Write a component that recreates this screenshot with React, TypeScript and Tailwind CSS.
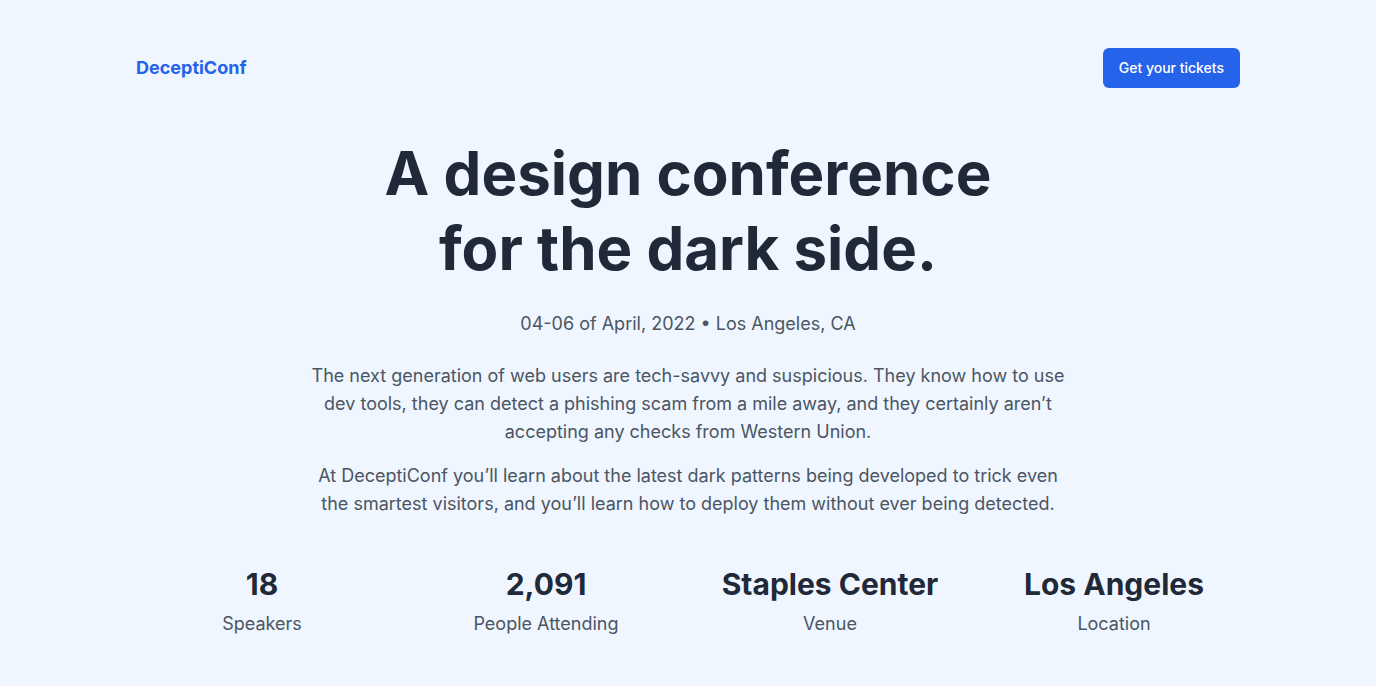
import React from 'react';

const stats = [
    { value: '18', label: 'Speakers' },
    { value: '2,091', label: 'People Attending' },
    { value: 'Staples Center', label: 'Venue' },
    { value: 'Los Angeles', label: 'Location' },
];

const App: React.FC = () => {
    return (
        <div className="min-h-screen bg-[#eff6ff] font-['Inter',sans-serif] text-[#1f2937]">
            <div className="max-w-6xl mx-auto px-6">
                <header className="flex items-center justify-between py-12">
                    <a href="#" className="text-lg font-bold text-[#2563eb]">DeceptiConf</a>
                    <button className="rounded-md bg-[#2563eb] px-4 py-2.5 text-sm font-medium text-white">
                        Get your tickets
                    </button>
                </header>

                <section className="text-center">
                    <h1 className="mx-auto max-w-2xl text-6xl font-bold leading-tight text-[#1f2937]">
                        A design conference for the dark side.
                    </h1>
                    <p className="mt-6 text-lg text-[#4b5563]">04-06 of April, 2022 • Los Angeles, CA</p>
                    <div className="mx-auto mt-6 max-w-3xl space-y-4 text-lg text-[#4b5563]">
                        <p>
                            The next generation of web users are tech-savvy and suspicious. They know how to use dev tools,
                            they can detect a phishing scam from a mile away, and they certainly aren’t accepting any checks
                            from Western Union.
                        </p>
                        <p>
                            At DeceptiConf you’ll learn about the latest dark patterns being developed to trick even the
                            smartest visitors, and you’ll learn how to deploy them without ever being detected.
                        </p>
                    </div>

                    <dl className="mt-12 grid grid-cols-4 gap-8 pb-12">
                        {stats.map((s) => (
                            <div key={s.label} className="flex flex-col-reverse">
                                <dt className="mt-2 text-lg text-[#4b5563]">{s.label}</dt>
                                <dd className="text-3xl font-bold text-[#1f2937]">{s.value}</dd>
                            </div>
                        ))}
                    </dl>
                </section>
            </div>
        </div>
    );
};

export default App;
